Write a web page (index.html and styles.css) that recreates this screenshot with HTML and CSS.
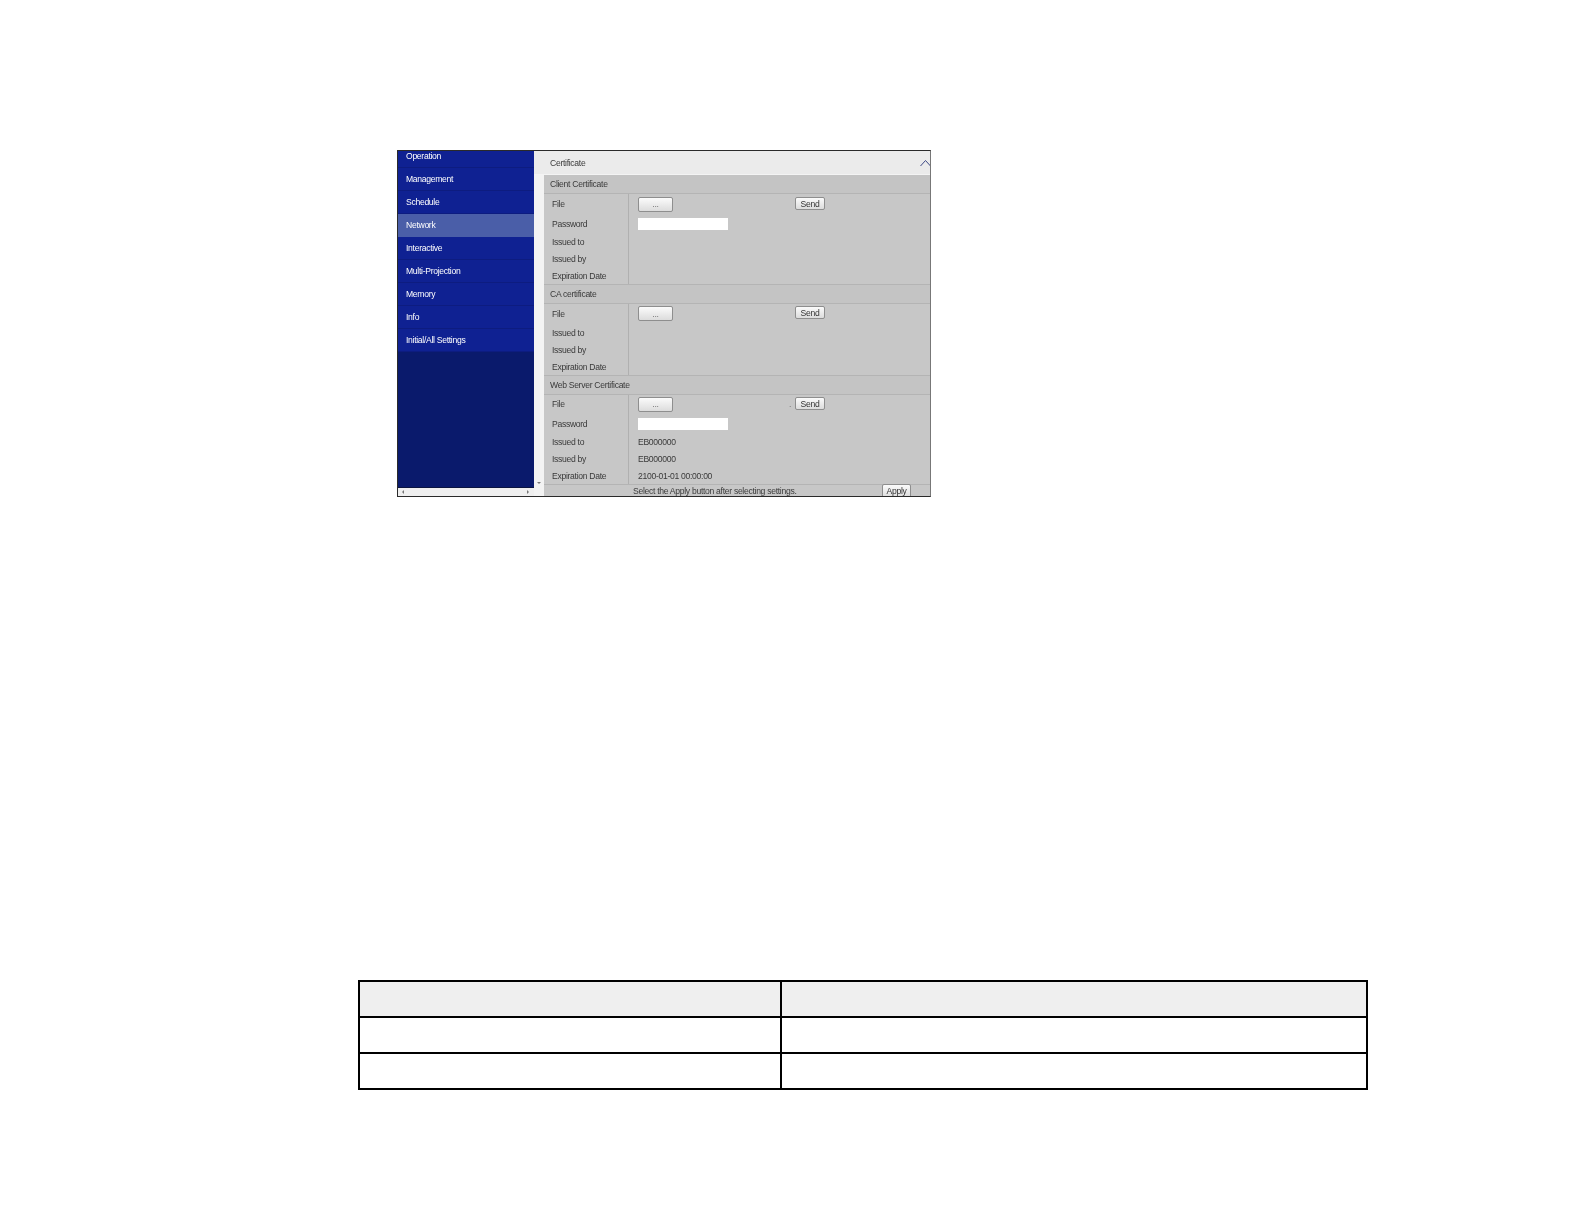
FILE: index.html
```html
<!DOCTYPE html>
<html lang="en">
<head>
  <meta charset="UTF-8" />
  <title>Certificate</title>
  <link rel="stylesheet" href="styles.css">
</head>
<body>

  <div class="frame">
    <div class="sidebar">
      <div class="menu">
        <a href="#">Operation</a>
        <a href="#">Management</a>
        <a href="#">Schedule</a>
        <a href="#" class="active">Network</a>
        <a href="#">Interactive</a>
        <a href="#">Multi-Projection</a>
        <a href="#">Memory</a>
        <a href="#">Info</a>
        <a href="#">Initial/All Settings</a>
      </div>
      <div class="hscroll">
        <span class="arrow-left"></span>
        <span class="arrow-right"></span>
      </div>
    </div>

    <div class="vscroll"><span class="arrow-down"></span></div>

    <div class="main">
      <div class="title">
        <span>Certificate</span>
        <svg class="chevron" width="10" height="8" viewBox="0 0 10 8">
          <path d="M0.5 7 L5.5 1.5 L10.5 7" fill="none" stroke="#3f4a86" stroke-width="1"/>
        </svg>
      </div>

      <div class="section-head">Client Certificate</div>
      <div class="section">
        <div class="row file-row">
          <div class="label">File</div>
          <div class="value"><button class="browse">...</button><button class="send">Send</button></div>
        </div>
        <div class="row pass-row">
          <div class="label">Password</div>
          <div class="value"><div class="input"></div></div>
        </div>
        <div class="row"><div class="label">Issued to</div><div class="value"></div></div>
        <div class="row"><div class="label">Issued by</div><div class="value"></div></div>
        <div class="row"><div class="label">Expiration Date</div><div class="value"></div></div>
      </div>

      <div class="section-head">CA certificate</div>
      <div class="section">
        <div class="row file-row ca-file">
          <div class="label">File</div>
          <div class="value"><button class="browse">...</button><button class="send">Send</button></div>
        </div>
        <div class="row"><div class="label">Issued to</div><div class="value"></div></div>
        <div class="row"><div class="label">Issued by</div><div class="value"></div></div>
        <div class="row"><div class="label">Expiration Date</div><div class="value"></div></div>
      </div>

      <div class="section-head">Web Server Certificate</div>
      <div class="section">
        <div class="row file-row web-file">
          <div class="label">File</div>
          <div class="value"><button class="browse">...</button><span class="dot">.</span><button class="send">Send</button></div>
        </div>
        <div class="row pass-row">
          <div class="label">Password</div>
          <div class="value"><div class="input"></div></div>
        </div>
        <div class="row"><div class="label">Issued to</div><div class="value">EB000000</div></div>
        <div class="row"><div class="label">Issued by</div><div class="value">EB000000</div></div>
        <div class="row"><div class="label">Expiration Date</div><div class="value">2100-01-01 00:00:00</div></div>
      </div>

      <div class="footer">
        <span>Select the Apply button after selecting settings.</span>
        <button class="apply">Apply</button>
      </div>
    </div>
  </div>

  <table class="blank-table">
    <tr class="head"><td class="col-one"></td><td></td></tr>
    <tr><td></td><td></td></tr>
    <tr><td></td><td></td></tr>
  </table>

</body>
</html>
```

FILE: styles.css
```css
body {
  font-family: "Liberation Sans", Arial, sans-serif;
  margin: 0;
  padding: 0;
  background-color: #fff;
}

.frame {
  display: flex;
  box-sizing: border-box;
  width: 534px;
  height: 347px;
  margin: 150px 0 0 397px;
  border: 1px solid #2a2a2a;
  border-right-color: #777;
  overflow: hidden;
  font-size: 8.6px;
  letter-spacing: -0.3px;
  filter: blur(0.35px);
}

.sidebar {
  display: flex;
  flex-direction: column;
  width: 136px;
  background-color: #0a1a6c;
}

.menu {
  flex: 1;
  margin-top: -6px;
}

.menu a {
  display: flex;
  align-items: center;
  box-sizing: border-box;
  height: 23px;
  padding-left: 8px;
  color: #fff;
  text-decoration: none;
  background-color: #0f2192;
  border-bottom: 1px solid #0d1c80;
}

.menu a.active {
  background-color: #4a5ea8;
  border-bottom-color: #4a5ea8;
}

.hscroll {
  display: flex;
  justify-content: space-between;
  align-items: center;
  flex: none;
  height: 8px;
  padding: 0 5px 0 4px;
  border-top: 1px solid #0a1440;
  background-color: #efefef;
}

.arrow-left {
  border: 2px solid transparent;
  border-left: 0;
  border-right: 2px solid #777;
}

.arrow-right {
  border: 2px solid transparent;
  border-right: 0;
  border-left: 2px solid #777;
}

.vscroll {
  display: flex;
  justify-content: center;
  align-items: flex-end;
  flex: none;
  width: 10px;
  padding-bottom: 12px;
  box-sizing: border-box;
  background-color: #f3f3f3;
}

.arrow-down {
  border: 2px solid transparent;
  border-bottom: 0;
  border-top: 2px solid #777;
}

.main {
  flex: 1;
  color: #3a3a3a;
  background-color: #c7c7c7;
}

.title {
  display: flex;
  justify-content: space-between;
  align-items: center;
  box-sizing: border-box;
  height: 24px;
  margin-left: -10px;
  padding: 1px 0 0 16px;
  background-color: #ebebeb;
  border-bottom: 1px solid #f4f4f4;
}

.chevron {
  flex: none;
}

.section-head {
  display: flex;
  align-items: center;
  box-sizing: border-box;
  height: 19px;
  padding-left: 6px;
  background-color: #c4c4c4;
  border-bottom: 1px solid #b4b4b4;
}

.section {
  border-bottom: 1px solid #b4b4b4;
}

.row {
  display: flex;
  height: 17px;
}

.file-row {
  height: 21px;
}

.file-row .value,
.file-row .label {
  padding-bottom: 1px;
}

.ca-file {
  height: 20px;
}

.web-file {
  height: 20px;
}

.web-file .value,
.web-file .label {
  padding-bottom: 2px;
}

.pass-row {
  height: 18px;
}

.label {
  display: flex;
  align-items: center;
  flex: none;
  box-sizing: border-box;
  width: 85px;
  padding-left: 8px;
  border-right: 1px solid #b0b0b0;
}

.value {
  display: flex;
  align-items: center;
  padding-left: 9px;
}

.input {
  width: 90px;
  height: 12px;
  background-color: #fff;
}

button {
  box-sizing: border-box;
  padding: 0;
  font-family: inherit;
  font-size: 8.6px;
  letter-spacing: -0.3px;
  color: #333;
  background: linear-gradient(#fbfbfb, #dcdcdc);
  border: 1px solid #8e8e8e;
  border-radius: 2px;
}

.browse {
  width: 35px;
  height: 15px;
  color: #777;
}

.send {
  width: 30px;
  height: 13px;
  margin: -1px 0 0 122px;
}

.ca-file .send {
  margin-top: -2px;
}

.dot {
  width: 6px;
  margin-left: 116px;
  color: #777;
}

.dot + .send {
  margin-left: 0;
}

.footer {
  display: flex;
  justify-content: space-between;
  align-items: flex-start;
  padding: 1px 19px 0 89px;
  line-height: 11px;
}

.apply {
  width: 29px;
  height: 14px;
  margin-top: -2px;
}

.blank-table {
  box-sizing: border-box;
  width: 1010px;
  height: 110px;
  margin: 483px 0 0 358px;
  border-collapse: collapse;
  border: 2px solid #000;
}

.blank-table td {
  height: 34px;
  padding: 0;
  border: 2px solid #000;
}

.blank-table .col-one {
  width: 420px;
}

.blank-table .head td {
  background-color: #efefef;
}
```
